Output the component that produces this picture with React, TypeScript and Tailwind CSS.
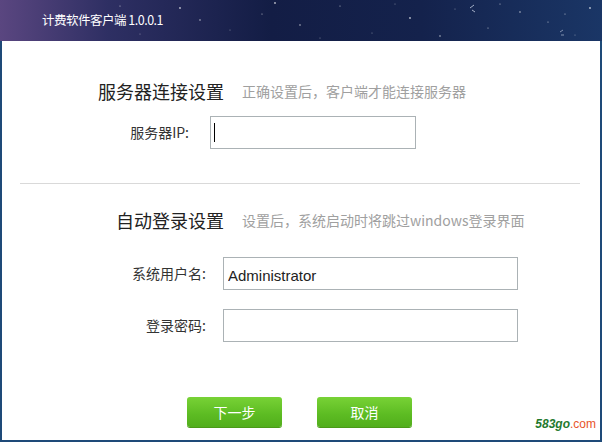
const stars = [
  [180, 8], [230, 30], [262, 14], [300, 25], [340, 6], [372, 33], [410, 18], [455, 9],
  [488, 28], [520, 12], [548, 22], [575, 35], [590, 8], [140, 34], [120, 6], [440, 36],
  [500, 4], [320, 38], [275, 3], [395, 4], [565, 14], [200, 20],
];

function Header() {
  return (
    <div className="relative h-[41px] bg-[linear-gradient(90deg,#5a4680_0%,#2e2f63_18%,#131d45_45%,#14224c_70%,#1a3666_100%)] flex items-center pl-[42px]">
      <svg className="absolute inset-0" width="602" height="41">
        {stars.map(([x, y], i) => (
          <circle key={i} cx={x} cy={y} r={i % 3 === 0 ? 0.9 : 0.6} fill="#ffffff" opacity={i % 2 ? 0.45 : 0.7} />
        ))}
        <path d="M470 8 l4 -3 M472 10 l3 2" stroke="#c9d3e6" strokeWidth="1" opacity="0.8" />
        <path d="M560 32 l3 -2 M561 35 l3 0" stroke="#c9d3e6" strokeWidth="1" opacity="0.6" />
      </svg>
      <span className="relative text-white text-[12.5px] tracking-[-0.5px] font-['Microsoft_YaHei','Noto_Sans_CJK_SC',sans-serif]">
        计费软件客户端 1.0.0.1
      </span>
    </div>
  );
}

function SectionTitle({ title, hint }: { title: string; hint: string }) {
  return (
    <div className="flex items-center">
      <div className="w-[222px] text-right text-[18px] leading-[24px] text-[#222]">{title}</div>
      <div className="ml-[18px] text-[14px] text-[#a0a0a0]">{hint}</div>
    </div>
  );
}

function Field({
  label,
  labelW,
  gap,
  inputW,
  value,
  caret,
}: {
  label: string;
  labelW: number;
  gap: number;
  inputW: number;
  value?: string;
  caret?: boolean;
}) {
  return (
    <div className="flex items-center">
      <div className="text-right text-[14px] text-[#333]" style={{ width: labelW }}>
        {label}
      </div>
      <div className="relative" style={{ marginLeft: gap, width: inputW }}>
        <input
          readOnly
          value={value ?? ''}
          className="w-full h-[33px] border border-[#abb2b5] bg-white px-[4px] pt-[3px] text-[15px] text-[#222] font-['Liberation_Sans',sans-serif] outline-none"
        />
        {caret && <span className="absolute left-[4px] top-[7px] w-px h-[19px] bg-black" />}
      </div>
    </div>
  );
}

function GreenButton({ children }: { children: string }) {
  return (
    <button className="w-[95px] h-[30px] rounded-[3px] bg-[linear-gradient(180deg,#78d236_0%,#5cbb22_60%,#52ae1c_100%)] text-white text-[14px] shadow-[0_1px_0_#4a9a18]">
      {children}
    </button>
  );
}

export default function App() {
  return (
    <div className="w-[602px] h-[442px] relative bg-white overflow-hidden font-['Noto_Sans_CJK_SC',sans-serif]">
      <Header />
      <div className="h-[401px] border-x-2 border-b-2 border-[#1e4a78] flex flex-col">
        <div className="mt-[38px]">
          <SectionTitle title="服务器连接设置" hint="正确设置后，客户端才能连接服务器" />
        </div>
        <div className="mt-[13px]">
          <Field label="服务器IP:" labelW={187} gap={21} inputW={206} caret />
        </div>
        <div className="mt-[34px] ml-[18px] mr-[20px] h-px bg-[#d9d9d9]" />
        <div className="mt-[24px]">
          <SectionTitle title="自动登录设置" hint="设置后，系统启动时将跳过windows登录界面" />
        </div>
        <div className="mt-[25px]">
          <Field label="系统用户名:" labelW={204} gap={17} inputW={295} value="Administrator" />
        </div>
        <div className="mt-[19px]">
          <Field label="登录密码:" labelW={204} gap={17} inputW={295} />
        </div>
        <div className="mt-[55px] flex gap-[35px] pl-[185px]">
          <GreenButton>下一步</GreenButton>
          <GreenButton>取消</GreenButton>
        </div>
      </div>
      <div className="absolute right-[6px] bottom-[12px] text-[12px] font-bold italic font-['Liberation_Sans',sans-serif] leading-none">
        <span className="text-[#1f7a2e]">583go</span>
        <span className="text-[#e8542a] not-italic font-normal">.com</span>
      </div>
    </div>
  );
}
